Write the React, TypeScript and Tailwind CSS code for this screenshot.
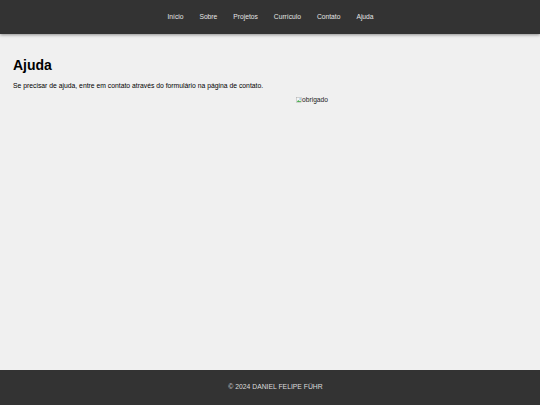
export default function App() {
  const links = ["Início", "Sobre", "Projetos", "Currículo", "Contato", "Ajuda"];

  return (
    <div className="flex min-h-[405px] flex-col bg-[#f0f0f0] font-['Liberation_Sans',Arial,sans-serif] text-black">
      <header className="flex h-[34px] items-center justify-center bg-[#333333] shadow-[0_1px_3px_rgba(0,0,0,0.4)]">
        <nav className="flex items-center gap-[16px] pl-[1px]">
          {links.map((l) => (
            <a key={l} href="#" className="text-[6.7px] text-[#e6e6e6]">
              {l}
            </a>
          ))}
        </nav>
      </header>

      <main className="flex-1 px-[13px] pt-[23px]">
        <h1 className="text-[14px] leading-[17px] font-bold">Ajuda</h1>
        <p className="mt-[7px] text-[6.8px] leading-[9px]">
          Se precisar de ajuda, entre em contato através do formulário na página de contato.
        </p>
        <div className="mt-[5px] flex justify-center pl-[84px]">
          <span className="flex items-center text-[6.7px] leading-[9px] text-[#222]">
            <svg width="6" height="6" viewBox="0 0 16 16">
              <rect x="1" y="1" width="14" height="14" fill="#f4f4f4" stroke="#9a9a9a" />
              <path d="M2 13 L6 8 L9 11 L11 9 L14 13 Z" fill="#4caf50" />
              <circle cx="11" cy="5" r="2" fill="#6ab0de" />
            </svg>
            obrigado
          </span>
        </div>
      </main>

      <footer className="flex h-[35px] items-center justify-center bg-[#333333] pl-[11px]">
        <p className="text-[6.8px] text-[#dcdcdc]">© 2024 DANIEL FELIPE FÜHR</p>
      </footer>
    </div>
  );
}
